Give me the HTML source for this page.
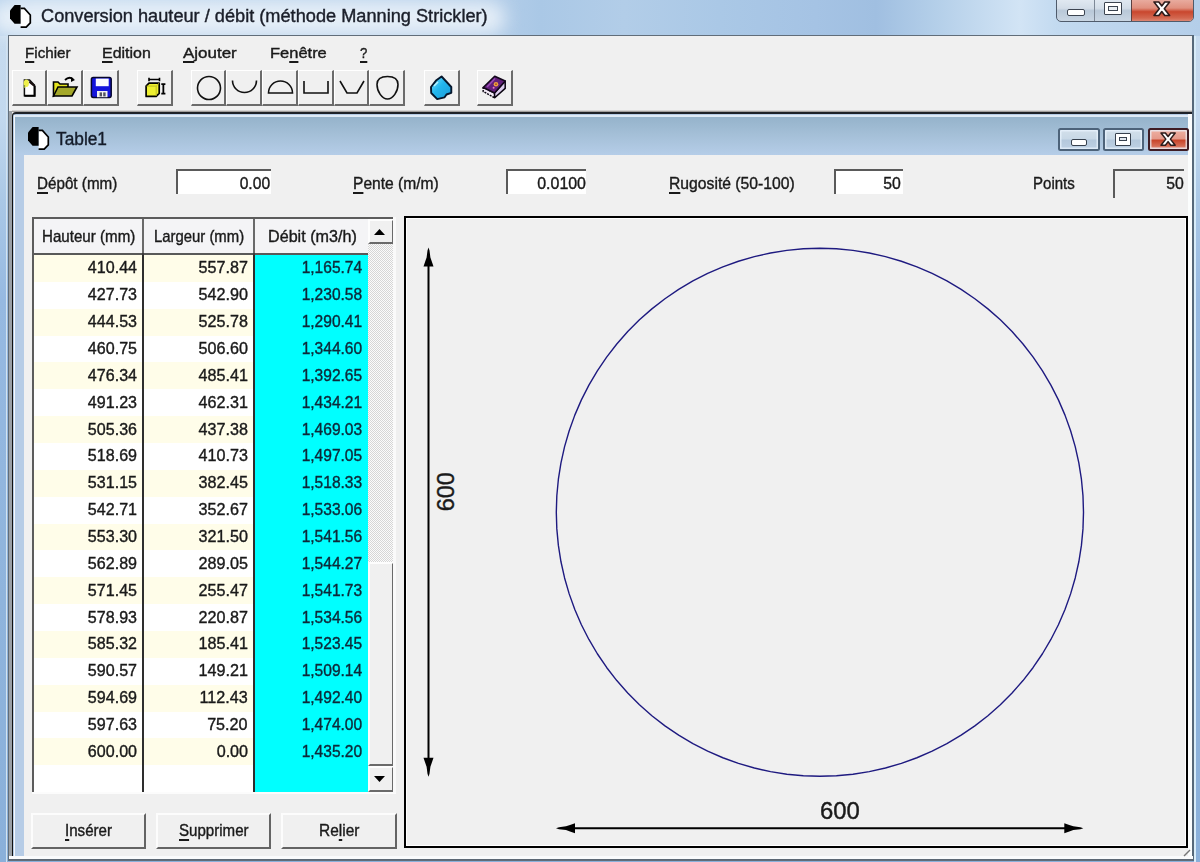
<!DOCTYPE html>
<html><head><meta charset="utf-8">
<style>
html,body{margin:0;padding:0;}
body{width:1200px;height:862px;position:relative;overflow:hidden;font-family:"Liberation Sans",sans-serif;color:#111;
background:linear-gradient(180deg,#c8dcef 0px,#c2d8ee 120px,#aac8e6 200px,#96b9e1 300px,#8fb4dc 600px,#8ab0da 862px);}
.a{position:absolute;box-sizing:border-box;}
.t{position:absolute;white-space:pre;line-height:1;-webkit-text-stroke:0.4px currentColor;}
.u{text-decoration:underline;text-underline-offset:2.5px;text-decoration-thickness:1.5px;}
svg{position:absolute;overflow:visible;}
</style></head><body>

<div class="a" style="left:0px;top:0px;width:1200px;height:36px;background:linear-gradient(90deg,#b8d2ec 0%,#c4daef 3%,#bcd4ec 30%,#b4cee9 41%,#aac8e6 45%,#b2cde8 52%,#aac8e6 60%,#a5c3e4 68%,#a0bfe1 73%,#b4cfe9 78%,#d2e4f5 85%,#c3daf0 88%,#b4cee9 100%);"></div>
<div class="a" style="left:-10px;top:2px;width:515px;height:32px;background:rgba(236,243,249,0.9);filter:blur(9px);border-radius:16px;"></div>
<div class="a" style="left:6px;top:36px;width:1.4px;height:826px;background:#d2e2ef;"></div>
<div class="a" style="left:1194.2px;top:36px;width:1.8px;height:826px;background:#d8ecf8;"></div>
<svg style="left:9.3px;top:3.8px" width="24" height="26" viewBox="-1 -1 24 26"><path d="M10.6 3.4 L14.4 3.4 L20.3 10 L20.3 17.9 L16.2 22.2 L10.6 22.2 Z" fill="#fff"/><path d="M10.6 3.4 L14.4 3.4 L20.3 10 L20.3 17.9 L16.2 22.2 L10.6 22.2" fill="none" stroke="#000" stroke-width="1.7" stroke-linejoin="miter"/><path d="M10.6 0 L4.6 0 L0 5.6 L0 13.4 L4.6 18.8 L10.6 18.8 Z" fill="#000"/></svg>
<div class="t" style="left:40.60px;top:6.66px;font-size:18.3px;color:#1b1f2a;transform:scaleX(0.9945);transform-origin:0 0;">Conversion hauteur / débit (méthode Manning Strickler)</div>
<div class="a" style="left:1056px;top:-3px;width:138px;height:25px;border:1px solid #4f5b6b;border-radius:0 0 5px 5px;overflow:hidden;background:linear-gradient(180deg,#e3ebf3 0%,#d3dde8 45%,#b9c8d8 55%,#c9d6e3 100%);">
<div class="a" style="left:37px;top:0;width:1px;height:25px;background:#7d8896"></div>
<div class="a" style="left:74px;top:0;width:64px;height:25px;border-left:1px solid #5c4040;background:linear-gradient(180deg,#eab2a6 0%,#e0907f 40%,#c9472e 55%,#d3674f 80%,#e29b8b 100%);"></div>
<div class="a" style="left:10px;top:11px;width:18px;height:7px;border:1.5px solid #3c4450;border-radius:2px;background:#fff;"></div>
<div class="a" style="left:47px;top:4px;width:18px;height:13px;border:1.5px solid #3c4450;border-radius:1px;background:#fff;"><div class="a" style="left:2.5px;top:2.5px;width:10px;height:5px;border:1.5px solid #3c4450;background:#e9eef3"></div></div>
</div>
<svg style="left:1154.3px;top:2px" width="15.6" height="13.5" viewBox="0 0 15.6 13.5"><path d="M0.00 0.00 L4.84 0.00 L7.80 3.91 L10.76 0.00 L15.60 0.00 L10.30 6.75 L15.60 13.50 L10.76 13.50 L7.80 9.59 L4.84 13.50 L0.00 13.50 L5.30 6.75 Z" fill="#fff" stroke="#2d1c1c" stroke-width="1.6" stroke-linejoin="round"/></svg>
<div class="a" style="left:8px;top:35px;width:1186px;height:826px;background:#f0f0f0;border:1px solid #616d79;"></div>
<div class="t" style="left:24.65px;top:44.76px;font-size:15.4px;color:#1a1a1a;transform:scaleX(0.9858);transform-origin:0 0;"><span class="u">F</span>ichier</div>
<div class="t" style="left:102.40px;top:44.76px;font-size:15.4px;color:#1a1a1a;transform:scaleX(1.0364);transform-origin:0 0;"><span class="u">E</span>dition</div>
<div class="t" style="left:183.40px;top:44.76px;font-size:15.4px;color:#1a1a1a;transform:scaleX(1.1026);transform-origin:0 0;"><span class="u">A</span>jouter</div>
<div class="t" style="left:270.40px;top:44.76px;font-size:15.4px;color:#1a1a1a;transform:scaleX(1.0702);transform-origin:0 0;">Fe<span class="u">n</span>être</div>
<div class="t" style="left:360.40px;top:44.76px;font-size:15.4px;color:#1a1a1a;transform:scaleX(0.8523);transform-origin:0 0;"><span class="u">?</span></div>
<div class="a" style="left:12px;top:69.5px;width:35px;height:36.5px;border-top:1px solid #fff;border-left:1px solid #fff;border-right:2px solid #6b6b6b;border-bottom:2px solid #6b6b6b;background:#f0f0f0"></div>
<div class="a" style="left:47px;top:69.5px;width:36px;height:36.5px;border-top:1px solid #fff;border-left:1px solid #fff;border-right:2px solid #6b6b6b;border-bottom:2px solid #6b6b6b;background:#f0f0f0"></div>
<div class="a" style="left:83px;top:69.5px;width:36px;height:36.5px;border-top:1px solid #fff;border-left:1px solid #fff;border-right:2px solid #6b6b6b;border-bottom:2px solid #6b6b6b;background:#f0f0f0"></div>
<div class="a" style="left:137px;top:69.5px;width:36px;height:36.5px;border-top:1px solid #fff;border-left:1px solid #fff;border-right:2px solid #6b6b6b;border-bottom:2px solid #6b6b6b;background:#f0f0f0"></div>
<div class="a" style="left:191px;top:69.5px;width:35px;height:36.5px;border-top:1px solid #fff;border-left:1px solid #fff;border-right:2px solid #6b6b6b;border-bottom:2px solid #6b6b6b;background:#f0f0f0"></div>
<div class="a" style="left:226px;top:69.5px;width:36px;height:36.5px;border-top:1px solid #fff;border-left:1px solid #fff;border-right:2px solid #6b6b6b;border-bottom:2px solid #6b6b6b;background:#f0f0f0"></div>
<div class="a" style="left:262px;top:69.5px;width:36px;height:36.5px;border-top:1px solid #fff;border-left:1px solid #fff;border-right:2px solid #6b6b6b;border-bottom:2px solid #6b6b6b;background:#f0f0f0"></div>
<div class="a" style="left:298px;top:69.5px;width:36px;height:36.5px;border-top:1px solid #fff;border-left:1px solid #fff;border-right:2px solid #6b6b6b;border-bottom:2px solid #6b6b6b;background:#f0f0f0"></div>
<div class="a" style="left:334px;top:69.5px;width:35px;height:36.5px;border-top:1px solid #fff;border-left:1px solid #fff;border-right:2px solid #6b6b6b;border-bottom:2px solid #6b6b6b;background:#f0f0f0"></div>
<div class="a" style="left:369px;top:69.5px;width:36px;height:36.5px;border-top:1px solid #fff;border-left:1px solid #fff;border-right:2px solid #6b6b6b;border-bottom:2px solid #6b6b6b;background:#f0f0f0"></div>
<div class="a" style="left:424px;top:69.5px;width:36px;height:36.5px;border-top:1px solid #fff;border-left:1px solid #fff;border-right:2px solid #6b6b6b;border-bottom:2px solid #6b6b6b;background:#f0f0f0"></div>
<div class="a" style="left:477px;top:69.5px;width:36px;height:36.5px;border-top:1px solid #fff;border-left:1px solid #fff;border-right:2px solid #6b6b6b;border-bottom:2px solid #6b6b6b;background:#f0f0f0"></div>
<svg style="left:22px;top:77px" width="16" height="21" viewBox="0 0 16 21"><path d="M2.4 3 L7.6 3 L12.6 8.2 L12.6 18.8 L2.4 18.8 Z" fill="#fff" stroke="#111" stroke-width="1.5" stroke-linejoin="miter"/><path d="M2.4 18.8 H12.6 V9" fill="none" stroke="#000" stroke-width="2"/><path d="M7.4 4.4 L8.6 5.8 L12.2 8.6" fill="none" stroke="#1a1010" stroke-width="2.2"/><ellipse cx="4.3" cy="6.2" rx="2.6" ry="3.8" fill="#eef04a"/><path d="M2.4 8 V11" stroke="#8a9a30" stroke-width="1.4"/></svg>
<svg style="left:52px;top:76px" width="27" height="22" viewBox="0 0 27 22"><path d="M1.5 6 L6 6 L8 8 L16 8 L16 11 L1.5 20 Z" fill="#e3e31d" stroke="#000" stroke-width="1.6"/><path d="M1.5 20 L6 11 L25 11 L20 20 Z" fill="#a4a82a" stroke="#000" stroke-width="1.6"/><path d="M13 4 Q17 0 21 3" stroke="#000" stroke-width="1.8" fill="none"/><path d="M19 1 L23 4 L19 6 Z" fill="#000"/></svg>
<svg style="left:90px;top:76px" width="23" height="23" viewBox="0 0 23 23"><rect x="1.4" y="1.6" width="19.8" height="19.8" rx="1.8" fill="#1414dc" stroke="#05052a" stroke-width="1.5"/><rect x="5.8" y="2.6" width="12.9" height="7.6" fill="#fbfbff"/><rect x="7" y="15" width="10.5" height="6.2" fill="#f0f0f0"/><rect x="9.6" y="16.4" width="2.4" height="4" fill="#505060"/><rect x="13.2" y="16.4" width="2.4" height="4" fill="#505060"/></svg>
<svg style="left:144px;top:76px" width="24" height="23" viewBox="0 0 24 23"><path d="M5 3.5 H15.5 M5 1.8 V5.2 M15.5 1.8 V5.2" stroke="#000" stroke-width="1.6"/><path d="M2.1 10.1 L5 7.1 L15.2 7.1 L15.2 17.4 L12.2 20.4 L2.1 20.4 Z" fill="#eef030" stroke="#000" stroke-width="1.7" stroke-linejoin="round"/><path d="M2.6 10.1 H12.2 V20 M12.2 10.1 L15 7.3" stroke="#b8b820" stroke-width="0.9" fill="none"/><path d="M17.3 8.2 H21.4 M19.35 8.2 V17.6 M17.3 17.6 H21.4" stroke="#000" stroke-width="1.8"/></svg>
<svg style="left:191px;top:69px" width="214" height="37" viewBox="0 0 214 37" fill="none" stroke="#111" stroke-width="1.6"><circle cx="18" cy="19" r="11.5"/><path d="M41.5 11.5 A12 12 0 0 0 65.5 11.5"/><path d="M77.5 24 A12 12 0 0 1 101.5 24 Z"/><path d="M113 12 V24 H137 V12"/><path d="M149 12 L156 24 H166 L173 12"/><path d="M196.5 7.5 C203 7.5 207 9.5 207 15.5 C207 22.5 202 30 196.5 30 C191 30 186 22.5 186 15.5 C186 9.5 190 7.5 196.5 7.5 Z"/></svg>
<svg style="left:429px;top:75px" width="25" height="27" viewBox="0 0 25 27"><defs><linearGradient id="dg" x1="0" y1="0" x2="1" y2="1"><stop offset="0" stop-color="#7fe4ff"/><stop offset="0.45" stop-color="#22b6ee"/><stop offset="1" stop-color="#1a9ad8"/></linearGradient></defs><path d="M12.6 1.5 L22.3 12 L22.3 17.8 L17.5 19.5 L15.6 22.3 L8.2 24.1 L2.2 18 L2 12 L7 5.6 Z" fill="url(#dg)" stroke="#05162c" stroke-width="1.9" stroke-linejoin="round"/><path d="M5 11 L9 7" stroke="#b8f2ff" stroke-width="1.6"/></svg>
<svg style="left:482px;top:75px" width="25" height="25" viewBox="0 0 25 25"><path d="M1.2 12.5 L12.5 18 L12.7 22.8 L1.2 16.5 Z" fill="#f2eaf6" stroke="#0a0510" stroke-width="1.5" stroke-linejoin="round" stroke-dasharray="2 1"/><path d="M12.5 18 L23.2 6 L23.2 13.4 L12.7 22.8 Z" fill="#dccdee" stroke="#0a0510" stroke-width="1.5" stroke-linejoin="round"/><path d="M12.7 1.2 L23.2 6 L12.5 18 L1.2 12.5 Z" fill="#62207a" stroke="#12061a" stroke-width="1.6" stroke-linejoin="round"/><path d="M5 12 L13 3.5" stroke="#9a4ab8" stroke-width="1.4"/><circle cx="14" cy="9.2" r="2.3" fill="#f0a040"/><circle cx="14" cy="9.2" r="0.9" fill="#a05020"/><circle cx="11.6" cy="12.8" r="1" fill="#e878c8"/></svg>
<div class="a" style="left:9px;top:111px;width:3px;height:748px;background:#9aa0a6;"></div>
<div class="a" style="left:12px;top:109.5px;width:1180px;height:2.5px;background:linear-gradient(180deg,rgba(120,110,100,0) 0%,rgba(90,85,80,0.7) 100%);"></div>
<div class="a" style="left:12px;top:112px;width:1182px;height:747px;background:#b6cce6;border-left:1.5px solid #111;border-top:2.2px solid #1e2228;border-radius:4px 0 0 0;"></div>
<div class="a" style="left:13.5px;top:114.5px;width:1180px;height:3px;background:#dfeaf5;"></div>
<div class="a" style="left:13.5px;top:114.5px;width:1.5px;height:744px;background:#f4f8fb;"></div>
<div class="a" style="left:15px;top:117px;width:1174px;height:38px;background:linear-gradient(180deg,#95b3cb 0%,#a4bfd7 45%,#b5cde8 100%);"></div>
<div class="a" style="left:1188.3px;top:114px;width:4px;height:745px;background:#fbfdfd;"></div>
<div class="a" style="left:1192.3px;top:35px;width:1.9px;height:826px;background:#56697a;"></div>
<svg style="left:27.1px;top:125.8px" width="24" height="26" viewBox="-1 -1 24 26"><path d="M10.6 3.4 L14.4 3.4 L20.3 10 L20.3 17.9 L16.2 22.2 L10.6 22.2 Z" fill="#fff"/><path d="M10.6 3.4 L14.4 3.4 L20.3 10 L20.3 17.9 L16.2 22.2 L10.6 22.2" fill="none" stroke="#000" stroke-width="1.7" stroke-linejoin="miter"/><path d="M10.6 0 L4.6 0 L0 5.6 L0 13.4 L4.6 18.8 L10.6 18.8 Z" fill="#000"/></svg>
<div class="t" style="left:56.15px;top:130.01px;font-size:18.3px;color:#141c2a;transform:scaleX(0.9467);transform-origin:0 0;">Table1</div>
<div class="a" style="left:1058.3px;top:128px;width:41.700000000000045px;height:22.7px;border:2px solid #4d637a;border-radius:2.5px;background:linear-gradient(180deg,#d2dfea 0%,#c8d8e6 48%,#b4c8dc 52%,#bdd0e3 100%);box-shadow:inset 0 0 0 1.5px rgba(235,245,255,0.7)"></div>
<div class="a" style="left:1103px;top:128px;width:41px;height:22.7px;border:2px solid #4d637a;border-radius:2.5px;background:linear-gradient(180deg,#d2dfea 0%,#c8d8e6 48%,#b4c8dc 52%,#bdd0e3 100%);box-shadow:inset 0 0 0 1.5px rgba(235,245,255,0.7)"></div>
<div class="a" style="left:1148px;top:128px;width:41px;height:22.7px;border:2px solid #3e1c24;border-radius:2.5px;background:linear-gradient(180deg,#eeb0a2 0%,#e5998a 45%,#c8462c 55%,#d66e57 85%,#e6a192 100%);box-shadow:inset 0 0 0 1.5px rgba(235,245,255,0.7)"></div>
<div class="a" style="left:1070.5px;top:138.5px;width:16.5px;height:7px;background:#fff;border:1.5px solid #37414e;border-radius:2px;"></div>
<div class="a" style="left:1115px;top:132.5px;width:16px;height:13px;background:#fff;border:1.5px solid #37414e;border-radius:1px;"></div>
<div class="a" style="left:1119px;top:136.5px;width:8px;height:4.5px;background:#dfe6ee;border:1.5px solid #37414e;"></div>
<svg style="left:1161px;top:133px" width="14.2" height="12.2" viewBox="0 0 14.2 12.2"><path d="M0.00 0.00 L4.40 0.00 L7.10 3.54 L9.80 0.00 L14.20 0.00 L9.37 6.10 L14.20 12.20 L9.80 12.20 L7.10 8.66 L4.40 12.20 L0.00 12.20 L4.83 6.10 Z" fill="#fff" stroke="#2d1c1c" stroke-width="1.5" stroke-linejoin="round"/></svg>
<div class="a" style="left:24px;top:155px;width:1164.3px;height:701px;background:#f0f0f0;"></div>
<div class="a" style="left:9px;top:856px;width:1184px;height:2.5px;background:#fafbfc;"></div>
<div class="a" style="left:9px;top:858.5px;width:1184px;height:1.5px;background:#5d6874;"></div>
<div class="t" style="left:37.40px;top:174.68px;font-size:17px;color:#1a1a1a;transform:scaleX(0.8949);transform-origin:0 0;"><span class="u">D</span>épôt (mm)</div>
<div class="t" style="left:353.40px;top:174.68px;font-size:17px;color:#1a1a1a;transform:scaleX(0.9175);transform-origin:0 0;"><span class="u">P</span>ente (m/m)</div>
<div class="t" style="left:669.20px;top:174.68px;font-size:17px;color:#1a1a1a;transform:scaleX(0.9238);transform-origin:0 0;"><span class="u">R</span>ugosité (50-100)</div>
<div class="t" style="left:1033.40px;top:174.88px;font-size:17px;color:#1a1a1a;transform:scaleX(0.8847);transform-origin:0 0;">Points</div>
<div class="a" style="left:176px;top:169px;width:95px;height:25px;border-top:2px solid #5a5a5a;border-left:2px solid #5a5a5a;background:#fff;"></div>
<div class="a" style="left:505.7px;top:169px;width:80.30000000000001px;height:25px;border-top:2px solid #5a5a5a;border-left:2px solid #5a5a5a;background:#fff;"></div>
<div class="a" style="left:834.3px;top:169px;width:68.70000000000005px;height:25px;border-top:2px solid #5a5a5a;border-left:2px solid #5a5a5a;background:#fff;"></div>
<div class="a" style="left:1112.5px;top:169px;width:71.5px;height:29px;border-top:2px solid #5a5a5a;border-left:2px solid #5a5a5a;background:#f0f0f0;"></div>
<div class="t" style="right:930.10px;top:174.88px;font-size:17px;color:#1a1a1a;transform:scaleX(0.9188);transform-origin:100% 0;">0.00</div>
<div class="t" style="right:614.40px;top:174.88px;font-size:17px;color:#1a1a1a;transform:scaleX(0.9385);transform-origin:100% 0;">0.0100</div>
<div class="t" style="right:298.60px;top:174.88px;font-size:17px;color:#1a1a1a;transform:scaleX(0.9300);transform-origin:100% 0;">50</div>
<div class="t" style="right:16.40px;top:175.18px;font-size:17px;color:#1a1a1a;transform:scaleX(0.9300);transform-origin:100% 0;">50</div>
<div class="a" style="left:32px;top:217px;width:361px;height:575px;background:#fff;border-left:2px solid #5c5c5c;border-top:2px solid #5c5c5c;"></div>
<div class="a" style="left:34px;top:219px;width:334px;height:34px;background:#f4f4f6;"></div>
<div class="a" style="left:34px;top:253px;width:334px;height:2px;background:#595959;"></div>
<div class="a" style="left:142px;top:219px;width:2px;height:573px;background:#3a3a3a;"></div>
<div class="a" style="left:253px;top:219px;width:2px;height:573px;background:#3a3a3a;"></div>
<div class="a" style="left:142px;top:219px;width:2px;height:34px;background:#6a6a6a;"></div>
<div class="a" style="left:253px;top:219px;width:2px;height:34px;background:#6a6a6a;"></div>
<div class="t" style="left:42.40px;top:228.38px;font-size:17px;color:#1a1a1a;transform:scaleX(0.8899);transform-origin:0 0;">Hauteur (mm)</div>
<div class="t" style="left:153.90px;top:228.38px;font-size:17px;color:#1a1a1a;transform:scaleX(0.8751);transform-origin:0 0;">Largeur (mm)</div>
<div class="t" style="left:268.10px;top:228.38px;font-size:17px;color:#1a1a1a;transform:scaleX(0.9495);transform-origin:0 0;">Débit (m3/h)</div>
<div class="a" style="left:255px;top:255px;width:113px;height:537px;background:#00ffff;"></div>
<div class="a" style="left:34px;top:255.00px;width:108px;height:26.86px;background:#fffde9"></div>
<div class="a" style="left:144px;top:255.00px;width:109px;height:26.86px;background:#fffde9"></div>
<div class="t" style="right:1063.20px;top:259.38px;font-size:17px;color:#1a1a1a;transform:scaleX(0.9450);transform-origin:100% 0;">410.44</div>
<div class="t" style="right:952.40px;top:259.38px;font-size:17px;color:#1a1a1a;transform:scaleX(0.9500);transform-origin:100% 0;">557.87</div>
<div class="t" style="right:837.80px;top:259.38px;font-size:17px;color:#0e2838;transform:scaleX(0.9150);transform-origin:100% 0;">1,165.74</div>
<div class="t" style="right:1063.20px;top:286.24px;font-size:17px;color:#1a1a1a;transform:scaleX(0.9450);transform-origin:100% 0;">427.73</div>
<div class="t" style="right:952.40px;top:286.24px;font-size:17px;color:#1a1a1a;transform:scaleX(0.9500);transform-origin:100% 0;">542.90</div>
<div class="t" style="right:837.80px;top:286.24px;font-size:17px;color:#0e2838;transform:scaleX(0.9150);transform-origin:100% 0;">1,230.58</div>
<div class="a" style="left:34px;top:308.72px;width:108px;height:26.86px;background:#fffde9"></div>
<div class="a" style="left:144px;top:308.72px;width:109px;height:26.86px;background:#fffde9"></div>
<div class="t" style="right:1063.20px;top:313.10px;font-size:17px;color:#1a1a1a;transform:scaleX(0.9450);transform-origin:100% 0;">444.53</div>
<div class="t" style="right:952.40px;top:313.10px;font-size:17px;color:#1a1a1a;transform:scaleX(0.9500);transform-origin:100% 0;">525.78</div>
<div class="t" style="right:837.80px;top:313.10px;font-size:17px;color:#0e2838;transform:scaleX(0.9150);transform-origin:100% 0;">1,290.41</div>
<div class="t" style="right:1063.20px;top:339.96px;font-size:17px;color:#1a1a1a;transform:scaleX(0.9450);transform-origin:100% 0;">460.75</div>
<div class="t" style="right:952.40px;top:339.96px;font-size:17px;color:#1a1a1a;transform:scaleX(0.9500);transform-origin:100% 0;">506.60</div>
<div class="t" style="right:837.80px;top:339.96px;font-size:17px;color:#0e2838;transform:scaleX(0.9150);transform-origin:100% 0;">1,344.60</div>
<div class="a" style="left:34px;top:362.44px;width:108px;height:26.86px;background:#fffde9"></div>
<div class="a" style="left:144px;top:362.44px;width:109px;height:26.86px;background:#fffde9"></div>
<div class="t" style="right:1063.20px;top:366.82px;font-size:17px;color:#1a1a1a;transform:scaleX(0.9450);transform-origin:100% 0;">476.34</div>
<div class="t" style="right:952.40px;top:366.82px;font-size:17px;color:#1a1a1a;transform:scaleX(0.9500);transform-origin:100% 0;">485.41</div>
<div class="t" style="right:837.80px;top:366.82px;font-size:17px;color:#0e2838;transform:scaleX(0.9150);transform-origin:100% 0;">1,392.65</div>
<div class="t" style="right:1063.20px;top:393.68px;font-size:17px;color:#1a1a1a;transform:scaleX(0.9450);transform-origin:100% 0;">491.23</div>
<div class="t" style="right:952.40px;top:393.68px;font-size:17px;color:#1a1a1a;transform:scaleX(0.9500);transform-origin:100% 0;">462.31</div>
<div class="t" style="right:837.80px;top:393.68px;font-size:17px;color:#0e2838;transform:scaleX(0.9150);transform-origin:100% 0;">1,434.21</div>
<div class="a" style="left:34px;top:416.16px;width:108px;height:26.86px;background:#fffde9"></div>
<div class="a" style="left:144px;top:416.16px;width:109px;height:26.86px;background:#fffde9"></div>
<div class="t" style="right:1063.20px;top:420.54px;font-size:17px;color:#1a1a1a;transform:scaleX(0.9450);transform-origin:100% 0;">505.36</div>
<div class="t" style="right:952.40px;top:420.54px;font-size:17px;color:#1a1a1a;transform:scaleX(0.9500);transform-origin:100% 0;">437.38</div>
<div class="t" style="right:837.80px;top:420.54px;font-size:17px;color:#0e2838;transform:scaleX(0.9150);transform-origin:100% 0;">1,469.03</div>
<div class="t" style="right:1063.20px;top:447.40px;font-size:17px;color:#1a1a1a;transform:scaleX(0.9450);transform-origin:100% 0;">518.69</div>
<div class="t" style="right:952.40px;top:447.40px;font-size:17px;color:#1a1a1a;transform:scaleX(0.9500);transform-origin:100% 0;">410.73</div>
<div class="t" style="right:837.80px;top:447.40px;font-size:17px;color:#0e2838;transform:scaleX(0.9150);transform-origin:100% 0;">1,497.05</div>
<div class="a" style="left:34px;top:469.88px;width:108px;height:26.86px;background:#fffde9"></div>
<div class="a" style="left:144px;top:469.88px;width:109px;height:26.86px;background:#fffde9"></div>
<div class="t" style="right:1063.20px;top:474.26px;font-size:17px;color:#1a1a1a;transform:scaleX(0.9450);transform-origin:100% 0;">531.15</div>
<div class="t" style="right:952.40px;top:474.26px;font-size:17px;color:#1a1a1a;transform:scaleX(0.9500);transform-origin:100% 0;">382.45</div>
<div class="t" style="right:837.80px;top:474.26px;font-size:17px;color:#0e2838;transform:scaleX(0.9150);transform-origin:100% 0;">1,518.33</div>
<div class="t" style="right:1063.20px;top:501.12px;font-size:17px;color:#1a1a1a;transform:scaleX(0.9450);transform-origin:100% 0;">542.71</div>
<div class="t" style="right:952.40px;top:501.12px;font-size:17px;color:#1a1a1a;transform:scaleX(0.9500);transform-origin:100% 0;">352.67</div>
<div class="t" style="right:837.80px;top:501.12px;font-size:17px;color:#0e2838;transform:scaleX(0.9150);transform-origin:100% 0;">1,533.06</div>
<div class="a" style="left:34px;top:523.60px;width:108px;height:26.86px;background:#fffde9"></div>
<div class="a" style="left:144px;top:523.60px;width:109px;height:26.86px;background:#fffde9"></div>
<div class="t" style="right:1063.20px;top:527.98px;font-size:17px;color:#1a1a1a;transform:scaleX(0.9450);transform-origin:100% 0;">553.30</div>
<div class="t" style="right:952.40px;top:527.98px;font-size:17px;color:#1a1a1a;transform:scaleX(0.9500);transform-origin:100% 0;">321.50</div>
<div class="t" style="right:837.80px;top:527.98px;font-size:17px;color:#0e2838;transform:scaleX(0.9150);transform-origin:100% 0;">1,541.56</div>
<div class="t" style="right:1063.20px;top:554.84px;font-size:17px;color:#1a1a1a;transform:scaleX(0.9450);transform-origin:100% 0;">562.89</div>
<div class="t" style="right:952.40px;top:554.84px;font-size:17px;color:#1a1a1a;transform:scaleX(0.9500);transform-origin:100% 0;">289.05</div>
<div class="t" style="right:837.80px;top:554.84px;font-size:17px;color:#0e2838;transform:scaleX(0.9150);transform-origin:100% 0;">1,544.27</div>
<div class="a" style="left:34px;top:577.32px;width:108px;height:26.86px;background:#fffde9"></div>
<div class="a" style="left:144px;top:577.32px;width:109px;height:26.86px;background:#fffde9"></div>
<div class="t" style="right:1063.20px;top:581.70px;font-size:17px;color:#1a1a1a;transform:scaleX(0.9450);transform-origin:100% 0;">571.45</div>
<div class="t" style="right:952.40px;top:581.70px;font-size:17px;color:#1a1a1a;transform:scaleX(0.9500);transform-origin:100% 0;">255.47</div>
<div class="t" style="right:837.80px;top:581.70px;font-size:17px;color:#0e2838;transform:scaleX(0.9150);transform-origin:100% 0;">1,541.73</div>
<div class="t" style="right:1063.20px;top:608.56px;font-size:17px;color:#1a1a1a;transform:scaleX(0.9450);transform-origin:100% 0;">578.93</div>
<div class="t" style="right:952.40px;top:608.56px;font-size:17px;color:#1a1a1a;transform:scaleX(0.9500);transform-origin:100% 0;">220.87</div>
<div class="t" style="right:837.80px;top:608.56px;font-size:17px;color:#0e2838;transform:scaleX(0.9150);transform-origin:100% 0;">1,534.56</div>
<div class="a" style="left:34px;top:631.04px;width:108px;height:26.86px;background:#fffde9"></div>
<div class="a" style="left:144px;top:631.04px;width:109px;height:26.86px;background:#fffde9"></div>
<div class="t" style="right:1063.20px;top:635.42px;font-size:17px;color:#1a1a1a;transform:scaleX(0.9450);transform-origin:100% 0;">585.32</div>
<div class="t" style="right:952.40px;top:635.42px;font-size:17px;color:#1a1a1a;transform:scaleX(0.9500);transform-origin:100% 0;">185.41</div>
<div class="t" style="right:837.80px;top:635.42px;font-size:17px;color:#0e2838;transform:scaleX(0.9150);transform-origin:100% 0;">1,523.45</div>
<div class="t" style="right:1063.20px;top:662.28px;font-size:17px;color:#1a1a1a;transform:scaleX(0.9450);transform-origin:100% 0;">590.57</div>
<div class="t" style="right:952.40px;top:662.28px;font-size:17px;color:#1a1a1a;transform:scaleX(0.9500);transform-origin:100% 0;">149.21</div>
<div class="t" style="right:837.80px;top:662.28px;font-size:17px;color:#0e2838;transform:scaleX(0.9150);transform-origin:100% 0;">1,509.14</div>
<div class="a" style="left:34px;top:684.76px;width:108px;height:26.86px;background:#fffde9"></div>
<div class="a" style="left:144px;top:684.76px;width:109px;height:26.86px;background:#fffde9"></div>
<div class="t" style="right:1063.20px;top:689.14px;font-size:17px;color:#1a1a1a;transform:scaleX(0.9450);transform-origin:100% 0;">594.69</div>
<div class="t" style="right:952.40px;top:689.14px;font-size:17px;color:#1a1a1a;transform:scaleX(0.9500);transform-origin:100% 0;">112.43</div>
<div class="t" style="right:837.80px;top:689.14px;font-size:17px;color:#0e2838;transform:scaleX(0.9150);transform-origin:100% 0;">1,492.40</div>
<div class="t" style="right:1063.20px;top:716.00px;font-size:17px;color:#1a1a1a;transform:scaleX(0.9450);transform-origin:100% 0;">597.63</div>
<div class="t" style="right:952.40px;top:716.00px;font-size:17px;color:#1a1a1a;transform:scaleX(0.9500);transform-origin:100% 0;">75.20</div>
<div class="t" style="right:837.80px;top:716.00px;font-size:17px;color:#0e2838;transform:scaleX(0.9150);transform-origin:100% 0;">1,474.00</div>
<div class="a" style="left:34px;top:738.48px;width:108px;height:26.86px;background:#fffde9"></div>
<div class="a" style="left:144px;top:738.48px;width:109px;height:26.86px;background:#fffde9"></div>
<div class="t" style="right:1063.20px;top:742.86px;font-size:17px;color:#1a1a1a;transform:scaleX(0.9450);transform-origin:100% 0;">600.00</div>
<div class="t" style="right:952.40px;top:742.86px;font-size:17px;color:#1a1a1a;transform:scaleX(0.9500);transform-origin:100% 0;">0.00</div>
<div class="t" style="right:837.80px;top:742.86px;font-size:17px;color:#0e2838;transform:scaleX(0.9150);transform-origin:100% 0;">1,435.20</div>
<div class="a" style="left:142px;top:255px;width:2px;height:537px;background:#2e2e2e;"></div>
<div class="a" style="left:253px;top:255px;width:2px;height:537px;background:#2e2e2e;"></div>
<div class="a" style="left:368px;top:219px;width:25px;height:573px;background-color:#f4f4f4;background-image:repeating-conic-gradient(#d6d6d6 0 25%,#fbfbfb 0 50%);background-size:2px 2px;"></div>
<div class="a" style="left:368px;top:219px;width:25.5px;height:24.5px;background:#f0f0f0;border-top:2px solid #fdfdfd;border-left:2px solid #fdfdfd;border-right:2px solid #6a6a6a;border-bottom:2px solid #6a6a6a;"></div>
<div class="a" style="left:368px;top:562px;width:25.5px;height:204px;background:#f0f0f0;border-top:2px solid #fdfdfd;border-left:2px solid #fdfdfd;border-right:2px solid #6a6a6a;border-bottom:2px solid #6a6a6a;"></div>
<div class="a" style="left:368px;top:766px;width:25.5px;height:25.5px;background:#f0f0f0;border-top:2px solid #fdfdfd;border-left:2px solid #fdfdfd;border-right:2px solid #6a6a6a;border-bottom:2px solid #6a6a6a;"></div>
<svg style="left:374px;top:229px" width="11" height="6" viewBox="0 0 11 6"><path d="M0 6 L5.5 0 L11 6 Z" fill="#000"/></svg>
<svg style="left:374px;top:775.5px" width="11" height="6" viewBox="0 0 11 6"><path d="M0 0 L5.5 6 L11 0 Z" fill="#000"/></svg>
<div class="a" style="left:32px;top:791.5px;width:364px;height:2px;background:#fcfcfc;"></div>
<div class="a" style="left:393px;top:217px;width:3px;height:576px;background:#fafafa;"></div>
<div class="a" style="left:31px;top:812.5px;width:115px;height:36px;background:#f0f0f0;border-top:2px solid #fcfcfc;border-left:2px solid #fcfcfc;border-right:2px solid #646464;border-bottom:2.5px solid #646464;"></div>
<div class="t" style="left:64.65px;top:821.98px;font-size:17px;color:#1a1a1a;transform:scaleX(0.8893);transform-origin:0 0;"><span class="u">I</span>nsérer</div>
<div class="a" style="left:156px;top:812.5px;width:115px;height:36px;background:#f0f0f0;border-top:2px solid #fcfcfc;border-left:2px solid #fcfcfc;border-right:2px solid #646464;border-bottom:2.5px solid #646464;"></div>
<div class="t" style="left:179.10px;top:821.98px;font-size:17px;color:#1a1a1a;transform:scaleX(0.8875);transform-origin:0 0;"><span class="u">S</span>upprimer</div>
<div class="a" style="left:281px;top:812.5px;width:116px;height:36px;background:#f0f0f0;border-top:2px solid #fcfcfc;border-left:2px solid #fcfcfc;border-right:2px solid #646464;border-bottom:2.5px solid #646464;"></div>
<div class="t" style="left:319.10px;top:821.98px;font-size:17px;color:#1a1a1a;transform:scaleX(0.9099);transform-origin:0 0;">Re<span class="u">l</span>ier</div>
<div class="a" style="left:404px;top:216.3px;width:784.3px;height:632px;background:#f0f0f0;border:2px solid #000;box-shadow:inset 1px 1px 0 #fff, inset -1px -1px 0 #fff;"></div>
<svg style="left:0;top:0" width="1200" height="862" viewBox="0 0 1200 862"><polygon points="819.90,776.30 836.45,775.78 852.94,774.22 869.29,771.62 885.45,768.01 901.36,763.38 916.94,757.76 932.14,751.17 946.89,743.64 961.14,735.20 974.84,725.88 987.92,715.72 1000.35,704.75 1012.06,693.02 1023.01,680.58 1033.16,667.48 1042.46,653.76 1050.89,639.48 1058.41,624.71 1064.99,609.48 1070.60,593.88 1075.22,577.95 1078.83,561.77 1081.42,545.39 1082.98,528.88 1083.50,512.30 1082.98,495.72 1081.42,479.21 1078.83,462.83 1075.22,446.65 1070.60,430.72 1064.99,415.12 1058.41,399.89 1050.89,385.12 1042.46,370.84 1033.16,357.12 1023.01,344.02 1012.06,331.58 1000.35,319.85 987.92,308.88 974.84,298.72 961.14,289.40 946.89,280.96 932.14,273.43 916.94,266.84 901.36,261.22 885.45,256.59 869.29,252.98 852.94,250.38 836.45,248.82 819.90,248.30 803.35,248.82 786.86,250.38 770.51,252.98 754.35,256.59 738.44,261.22 722.86,266.84 707.66,273.43 692.91,280.96 678.66,289.40 664.96,298.72 651.88,308.88 639.45,319.85 627.74,331.58 616.79,344.02 606.64,357.12 597.34,370.84 588.91,385.12 581.39,399.89 574.81,415.12 569.20,430.72 564.58,446.65 560.97,462.83 558.38,479.21 556.82,495.72 556.30,512.30 556.82,528.88 558.38,545.39 560.97,561.77 564.58,577.95 569.20,593.88 574.81,609.48 581.39,624.71 588.91,639.48 597.34,653.76 606.64,667.48 616.79,680.58 627.74,693.02 639.45,704.75 651.88,715.72 664.96,725.88 678.66,735.20 692.91,743.64 707.66,751.17 722.86,757.76 738.44,763.38 754.35,768.01 770.51,771.62 786.86,774.22 803.35,775.78 819.90,776.30" fill="none" stroke="#1e1a80" stroke-width="1.4" stroke-linejoin="round"/><line x1="428.5" y1="262" x2="428.5" y2="762" stroke="#000" stroke-width="2"/><path d="M428.50 247.50 L427.50 250.50 L426.60 257.50 L425.20 261.50 L423.50 266.50 L433.50 266.50 L431.80 261.50 L430.40 257.50 L429.50 250.50 Z" fill="#000"/><path d="M428.50 776.70 L429.50 773.70 L430.40 766.70 L431.80 762.70 L433.50 757.70 L423.50 757.70 L425.20 762.70 L426.60 766.70 L427.50 773.70 Z" fill="#000"/><line x1="570" y1="828.2" x2="1070" y2="828.2" stroke="#000" stroke-width="2"/><path d="M556.00 828.20 L559.00 829.20 L566.00 830.10 L570.00 831.50 L575.00 833.20 L575.00 823.20 L570.00 824.90 L566.00 826.30 L559.00 827.20 Z" fill="#000"/><path d="M1083.30 828.20 L1080.30 827.20 L1073.30 826.30 L1069.30 824.90 L1064.30 823.20 L1064.30 833.20 L1069.30 831.50 L1073.30 830.10 L1080.30 829.20 Z" fill="#000"/></svg>
<div class="t" style="left:820.10px;top:800.05px;font-size:23.2px;color:#1a1a1a;transform:scaleX(1.0308);transform-origin:0 0;">600</div>
<div class="t" style="left:427px;top:479.5px;font-size:23.4px;color:#1a1a1a;transform:rotate(-90deg);transform-origin:center center;width:39px;height:23.4px;">600</div>
<svg style="left:1182px;top:849px" width="10" height="10" viewBox="0 0 10 10"><path d="M8 1 L2 7" stroke="#777" stroke-width="1.5"/></svg>
</body></html>
